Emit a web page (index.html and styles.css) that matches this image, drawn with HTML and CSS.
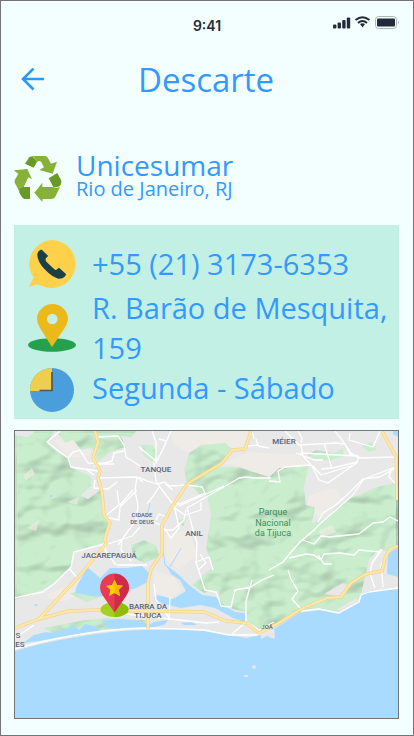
FILE: index.html
```
<!DOCTYPE html>
<html lang="pt-BR">
<head>
<meta charset="utf-8">
<meta name="viewport" content="width=device-width, initial-scale=1">
<title>Descarte</title>
<link rel="stylesheet" href="styles.css">
</head>
<body>
<div class="screen">
  <div class="status">
    <span class="time">9:41</span>
    <svg class="signals" viewBox="0 0 68 16" aria-hidden="true">
      <g fill="#262b3a">
        <rect x="1" y="9.500" width="3.400" height="4" rx="1"/><rect x="5.600" y="7.500" width="3.400" height="6" rx="1"/>
        <rect x="10.200" y="5" width="3.400" height="8.500" rx="1"/><rect x="14.800" y="2.500" width="3.400" height="11" rx="1"/>
        <path d="M28 9 30.500 12.500 33 9Q30.500 7.500 28 9Z"/>
      </g>
      <g fill="none" stroke="#262b3a" stroke-width="2"><path d="M23.500 5Q30.500-.5 37.500 5M26 8Q30.500 4 35 8"/></g>
      <rect x="43.500" y="1.500" width="21" height="12" rx="3" fill="none" stroke="#a9b9b6"/>
      <rect x="45" y="3.500" width="18" height="8" rx="1" fill="#262b3a"/>
      <path d="M66 5.500Q68 7.500 66 9.500Z" fill="#a9b9b6"/>
    </svg>
  </div>

  <header class="header">
    <a class="back" href="#" aria-label="Voltar">
      <svg viewBox="0 0 24 24"><path d="M23 11H2M12.500 .5 2 11 12.500 21.500" fill="none" stroke="#2b98fb" stroke-width="2.600"/></svg>
    </a>
    <h1>Descarte</h1>
  </header>

  <main class="content">
    <section class="place">
      <svg class="recycle" viewBox="44 42 144 141" aria-hidden="true">
        <g fill="#87b237">
          <path d="M94 45H138Q144 46 148 55L155 68 173 62 160 98 120 87 134 79 126 64Q121 56 113 63L104 49Z"/>
          <path d="M43 88 84 84 98 115 87 109 73 139H62Q60 148 62 155L47 127Q44 120 48 114L57 98Z"/>
          <path d="M182 138 168 167Q164 174 156 174H130L129 183 105 155 129 125V138H160Q174 142 182 138Z"/>
        </g>
        <g fill="#689a25">
          <path d="M90 49Q93 45 99 47 106 50 113 63L103 80 77 68Z"/>
          <path d="M60 142Q64 138 71 138H92V174H76Q69 173 66 166L60 155Z"/>
          <path d="M148 112 174 96 185 117Q188 123 184 131 181 138 172 138H162Z"/>
        </g>
      </svg>
      <div class="name">
        <h2>Unicesumar</h2>
        <p class="city">Rio de Janeiro, RJ</p>
      </div>
    </section>

    <ul class="details">
      <li class="phone">
        <svg viewBox="84 57 144 144" aria-hidden="true">
          <path d="M156 57A72 72 0 1 1 126 195Q118 189 108 191L87 198 98 174Q101 168 96 162A72 72 0 0 1 156 57Z" fill="#ffd14b"/>
          <path d="M122 86Q124 85 127 88L144 104Q144 106 138 111 135 116 139 122L163 145Q168 149 171 145L177 140 198 159Q199 162 193 168 187 174 175 173 158 170 134 145 112 121 112 101 112 91 122 86Z" fill="#194145"/>
        </svg>
        <a href="tel:+552131736353">+55 (21) 3173-6353</a>
      </li>
      <li class="address">
        <svg viewBox="28 304 48 48" aria-hidden="true">
          <ellipse cx="52" cy="345" rx="24" ry="6.700" fill="#25a04d"/>
          <path d="M52 347 40 328Q37 323 37 319A15.500 15 0 0 1 68 319Q68 323 64 329Z" fill="#ecb91a"/>
          <circle cx="52.300" cy="319" r="5.300" fill="#c3f0e5"/>
        </svg>
        <span>R. Barão de Mesquita, 159</span>
      </li>
      <li class="hours">
        <svg viewBox="28 368 48 44" aria-hidden="true">
          <circle cx="52" cy="390" r="22" fill="#4a9edb"/>
          <path d="M52 391H30A22 22 0 0 1 52 368Z" fill="#efce4b"/>
          <path d="M52 372V390.500H39.500" fill="none" stroke="#535660" stroke-width="1.700"/>
        </svg>
        <span>Segunda - Sábado</span>
      </li>
    </ul>

    <svg class="map" viewBox="16 431 383 287" role="img" aria-label="Mapa">
      <defs>
        <filter id="relief" x="0" y="0" width="1" height="1" color-interpolation-filters="sRGB">
          <feTurbulence type="fractalNoise" baseFrequency=".022 .036" numOctaves="3" seed="8"/>
          <feColorMatrix values="0 0 0 0 0 0 0 0 0 0 0 0 0 0 0 1 0 0 0 0"/>
          <feGaussianBlur stdDeviation="1"/>
          <feDiffuseLighting surfaceScale="12" diffuseConstant="1.150" lighting-color="#fff"><feDistantLight azimuth="225" elevation="60"/></feDiffuseLighting>
          <feComposite operator="arithmetic" in2="SourceGraphic" k1=".22" k2="0" k3=".78"/>
          <feComposite operator="in" in2="SourceGraphic"/>
        </filter>
      </defs>
      <rect x="16" y="431" width="383" height="287" fill="#e8e8e8"/>
      <g fill="#efebe6">
        <path d="M171 431H252L246 448 233 450 227 443 202 445 190 453 175 445ZM250 452 300 455 310 464 280 469 270 477 240 467 225 463ZM165 535 190 530 198 555 180 570 167 560ZM310 495 335 488 345 500 320 518 308 508Z"/>
        <path d="M55 440 72 434 92 440 91 456 70 458ZM45 596 70 585 80 594 65 602ZM155 570 175 577 184 590 170 599 155 592Z"/>
      </g>
      <g filter="url(#relief)" fill="#c9edcd">
        <path d="M16 435 29 437 36 431H56L48 442 58 452 70 458 73 468 88 474 93 478 92 486 82 495 89 499 102 489 105 515 110 523 105 538 106 544 75 552 72 568 56 583 37 593 16 600Z"/>
        <path d="M57 431H138L132 437 122 436 127 447 111 452 99 462 93 448 82 450 74 440 66 443Z"/>
        <path d="M190 453 202 445 227 443 235 451 222 463 188 484 185 470Z"/>
        <path d="M190 484 206 472 221 467 240 467 270 477 280 468 310 465 305 487 307 505 316 507 313 523 326 518 337 508 350 498 362 494 377 487 399 482V546L388 552 380 549 370 560 367 574 362 595 360 602 350 608 340 613 320 609 300 613 276 627 262 630 248 622 247 612 237 610 222 605 219 591 205 593 193 585 204 575 213 568 207 548 209 535 212 515 208 495 202 496Z"/>
        <path d="M308 455 317 450 335 453 344 448 345 456 330 461 315 459ZM362 446 373 442 378 450 370 452Z"/>
        <path d="M143 445 154 445 159 454 153 462 144 455ZM132 545 145 540 157 545 161 557 145 563 134 558ZM179 520 188 518 184 527Z"/>
        <path d="M70 593 88 590 100 598 87 602ZM45 628 85 620 110 618 147 620V626L108 630 60 638Z"/>
      </g>
      <g fill="#efece4" opacity=".65"><path d="M25 475 33 468 36 474 26 481ZM68 502 80 497 78 505ZM319 531 333 525 337 532 325 537ZM28 528 40 520 37 531Z"/></g>
      <path fill="#a9daff" d="M16 651Q42 643 77 637T143 630L180 629 205 631 230 635 247 638 257 636 263 635 262 639 268 636 275 639 275 629 300 613 320 610 340 613 350 608 360 602 362 595 370 591 399 589V718H16Z"/>
      <g fill="#a9daff">
        <path d="M88 567 93 571 101 578 111 568 128 568 143 566 151 574 149 582 135 589 119 588 111 594 99 597 76 593 78 586 83 577Z"/>
        <path d="M167 565 180 575 190 585 203 595 217 597 226 606 236 612 246 613 246 622 234 618 227 614 216 608 201 605 182 608 164 604 155 598 159 595 174 599 187 591 181 580 172 574Z"/>
        <path d="M24 643 35 635 47 632 53 633 70 628 73 625 80 630 86 624 99 627 100 631 68 636 40 641ZM103 621 120 619 141 621 150 625 155 622 169 620 165 625 150 628 118 629 106 627ZM182 623 193 622 198 625 185 625ZM394 431H399V437L394 434ZM389 554 399 547V577L388 574Z"/>
        <ellipse cx="52" cy="496" rx="1.500" ry="1"/><ellipse cx="37" cy="605" rx="1.500" ry="1"/>
      </g>
      <g fill="none" stroke="#a9daff"><path d="M148 515 151 505 149 501M164 550 166 565 176 574M171 567 182 548"/></g>
      <g fill="#e8e8e8"><path d="M262 631 275 627 276 638 268 635 262 639Z"/><ellipse cx="255" cy="667" rx="2" ry="1.700"/><ellipse cx="247" cy="676" rx="2.500" ry="1"/><path d="M325 594 344 583 350 586 342 596ZM337 610 357 598 360 601 344 611Z"/></g>
      <g fill="none" stroke="#fff" stroke-width="1.300" stroke-linejoin="round">
        <path d="M61 431 48 442 57 449 69 458 72 467 99 471M69 458 74 452 81 450 89 463 115 464M99 437 119 436 125 445 127 457 141 466M125 451 115 453 113 461 95 466M95 475 88 470M98 478 138 477 144 482M96 480 95 488 109 489 118 482M138 477 136 490 139 506 137 520 119 545M138 490 121 507 120 520 106 517M134 490 121 505M118 490 120 505 105 517M105 544 75 552 72 567 56 583 44 592 33 594 16 598M109 544 133 536 141 527M107 545 106 550 117 565M118 565 148 565M123 539 122 550 132 561M70 568 79 579"/>
        <path d="M153 431 157 442 157 463 164 449 172 431M160 439 168 441M140 447 157 461M155 463 157 481 161 487 173 503 180 503M140 477 148 481 158 484 165 482 171 486 188 485M166 484 174 490M160 487 155 495 148 504M173 505 168 517 160 514 157 520M153 521 161 525M176 506 206 493 203 487 188 485M188 508 230 484 240 478 247 477 255 478 272 478M180 506 225 486M202 502 202 510 186 515 174 507M187 510 185 520 174 530 165 530M188 507 194 530 198 543 197 562 210 557 214 570M201 554 207 563 199 570M175 505 180 528 172 538 165 528M255 439 253 431M257 439 259 445 249 446M259 446 270 448"/>
        <path d="M270 481 281 482 279 471 286 467 312 465M286 431 300 445 337 443 346 444 351 454 359 456M302 445 304 456 313 466 320 480 329 483 359 462M302 443 303 438 299 431M301 453 359 456M325 443 333 469M322 469 334 468 358 462 360 456M314 466 322 475 355 465M297 453 315 460 324 460M336 431 343 440 352 453 360 458 398 457M351 433 350 440 374 447 381 431M399 466 365 479 353 496 323 522 315 530 301 542 292 552 284 562 270 570M398 467 381 477 364 479 353 490 338 504 324 513 319 522M392 469 390 477 396 483M304 540 315 544 322 536 330 537 360 534 374 523 384 522 391 517 399 521M290 558 307 554 315 555 322 560 325 554 341 553 355 555 360 550 382 552M319 555 325 564 333 564M383 549 373 563 371 574 376 588M289 570 292 579 299 591 293 599 302 609M388 554 382 565 384 587M16 649Q42 641 77 635T143 628L180 629 205 630 230 635 257 635 265 632M100 611 171 619 207 623 220 622M197 562 206 590 217 592 222 606 232 607 236 590 252 587 263 580 275 575M253 580 247 601 247 622M248 622 260 630 275 622M247 622 233 634M302 611 320 609 340 613 360 602 362 595 370 592 399 588M171 597 170 620M155 584 157 600 171 619M16 638 35 625"/>
      </g>
      <g fill="none" stroke-linejoin="round">
        <path stroke="#f1d390" stroke-width="3.400" d="M96 431 99 442 94 458 101 471 99 478 103 492 105 515 111 523 106 538 107 544 82 574 40 619M16 628 40 619 70 611 100 610 150 611 205 612 227 621 247 623 260 633 280 623 302 609 328 598 342 597 352 583 367 574 383 571 386 558 391 549 399 546M252 431 246 449 233 450 223 463 188 484 173 507 163 525 163 553 152 569 149 582V629M383 431 397 457 398 500"/>
        <path stroke="#ffe8a6" stroke-width="2" d="M96 431 99 442 94 458 101 471 99 478 103 492 105 515 111 523 106 538 107 544 82 574 40 619M16 628 40 619 70 611 100 610 150 611 205 612 227 621 247 623 260 633 280 623 302 609 328 598 342 597 352 583 367 574 383 571 386 558 391 549 399 546M252 431 246 449 233 450 223 463 188 484 173 507 163 525 163 553 152 569 149 582V629M383 431 397 457 398 500"/>
      </g>
      <g class="districts" text-anchor="middle">
        <text x="285" y="444">MÉIER</text><text x="157" y="472">TANQUE</text><text x="195" y="536">ANIL</text>
        <text x="110" y="558">JACAREPAGUÁ</text><text x="149" y="609">BARRA DA</text><text x="149" y="618">TIJUCA</text>
        <text x="19" y="638">S</text><text x="21" y="647">ES</text>
        <g class="minor"><text x="143" y="517">CIDADE</text><text x="143" y="524">DE DEUS</text><text x="268" y="629">JOÁ</text></g>
      </g>
      <g class="park" text-anchor="middle"><text x="274" y="515">Parque</text><text x="274" y="526">Nacional</text><text x="274" y="536">da Tijuca</text></g>
      <g>
        <ellipse cx="115.500" cy="609.500" rx="14" ry="7.500" fill="#a4d023"/>
        <path d="M115.500 602A14 7.500 0 0 1 115.500 617Z" fill="#8fbd08"/>
        <path d="M115.500 612.500 104 596Q101 592 101 588A14.300 14.300 0 0 1 130 588Q130 592 127 596Z" fill="#e93b52"/>
        <path d="M115.500 612.500V574A14.300 14.300 0 0 1 130 588Q130 592 127 596Z" fill="#ce2c49"/>
        <path d="M115.500 579.500 118 585 124 585.800 119.700 589.800 121 596 115.500 593 110 596 111.300 589.800 107 585.800 113 585Z" fill="#ffd100"/>
        <path d="M115.500 579.500 118 585 124 585.800 119.700 589.800 121 596 115.500 593Z" fill="#ffb400"/>
      </g>
    </svg>
  </main>
</div>
</body>
</html>
```
FILE: styles.css
```
* { box-sizing: border-box; }

body {
  margin: 0;
  background: #f3fffe;
  color: #3399ff;
  font-family: "Open Sans", "Noto Sans", sans-serif;
}

h1, h2, p, ul { margin: 0; padding: 0; font-weight: 400; }
a { color: inherit; text-decoration: none; }
svg { display: block; }

.screen {
  min-height: 100vh;
  border: 1px solid #757575;
}

.status {
  display: grid;
  grid-template-columns: 1fr auto 1fr;
  padding: 14px 13px 0;
}

.time {
  grid-column: 2;
  padding-top: 1px;
  color: #262b3a;
  font: 600 14px/20px Inter, sans-serif;
}

.signals { width: 68px; height: 16px; justify-self: end; }

.header {
  display: grid;
  grid-template-columns: 24px 1fr 24px;
  align-items: center;
  padding: 18px 22px 0 20px;
}

.back svg { width: 24px; height: 24px; }

h1 {
  font-size: 33px;
  line-height: 52px;
  text-align: center;
}

.content { padding: 45px 14px 16px 13px; }

.place {
  display: flex;
  align-items: center;
  gap: 14px;
}

.name { padding-bottom: 6px; }
.recycle { width: 48px; height: 47px; }

h2 { font-size: 28px; line-height: 28px; }
.city { font-size: 20px; line-height: 20px; }

.details {
  margin-top: 20px;
  padding: 14px 8px 7px 14px;
  background: #c3f0e5;
  font-size: 29px;
  line-height: 40px;
  list-style: none;
}

.details li {
  display: grid;
  grid-template-columns: 48px 1fr;
  column-gap: 16px;
  align-items: center;
}

.details svg { width: 48px; height: 48px; }
.details .phone { min-height: 49px; }
.details .hours { align-items: start; }
.details .hours svg { height: 44px; }

.map {
  width: 100%;
  height: auto;
  margin-top: 11px;
  border: 1px solid #757575;
}

.districts {
  fill: #56647b;
  font: 500 8px Roboto, sans-serif;
}

.minor { font-size: 6px; }

.park {
  fill: #3f9150;
  font: 400 9px Roboto, sans-serif;
}
```
